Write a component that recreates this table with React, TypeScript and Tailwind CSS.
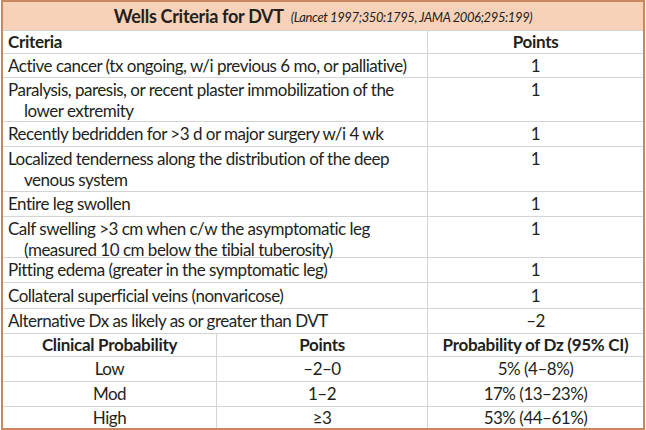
import React from "react";

const rows = [
  { text: ["Active cancer (tx ongoing, w/i previous 6 mo, or palliative)"], pts: "1", h: "h-[24px]" },
  { text: ["Paralysis, paresis, or recent plaster immobilization of the", "lower extremity"], pts: "1", h: "h-[44px]" },
  { text: ["Recently bedridden for >3 d or major surgery w/i 4 wk"], pts: "1", h: "h-[25px]" },
  { text: ["Localized tenderness along the distribution of the deep", "venous system"], pts: "1", h: "h-[45px]" },
  { text: ["Entire leg swollen"], pts: "1", h: "h-[25px]" },
  { text: ["Calf swelling >3 cm when c/w the asymptomatic leg", "(measured 10 cm below the tibial tuberosity)"], pts: "1", h: "h-[41px]" },
  { text: ["Pitting edema (greater in the symptomatic leg)"], pts: "1", h: "h-[25px]" },
  { text: ["Collateral superficial veins (nonvaricose)"], pts: "1", h: "h-[26px]" },
  { text: ["Alternative Dx as likely as or greater than DVT"], pts: "–2", h: "h-[25px]" },
];

const probs = [
  { level: "Low", pts: "–2–0", prob: "5% (4–8%)", h: "h-[25px]" },
  { level: "Mod", pts: "1–2", prob: "17% (13–23%)", h: "h-[25px]" },
  { level: "High", pts: "≥3", prob: "53% (44–61%)", h: "h-[22px]" },
];

export default function App() {
  return (
    <div className="w-[646px] h-[430px] bg-white pl-px">
      <div
        className="w-[644px] h-[430px] border-2 border-[#c98860] text-[#231f20] text-[17px] leading-[20px] tracking-[-0.5px]"
        style={{ fontFamily: "Lato, 'Open Sans', sans-serif" }}
      >
        {/* title bar */}
        <div className="h-[28px] bg-[#f8d2b8] flex items-center justify-center gap-[7px]">
          <span className="font-bold text-[18px] tracking-[-0.3px]">Wells Criteria for DVT</span>
          <span className="italic text-[13px] tracking-[-0.4px] pt-[2px]">
            (Lancet 1997;350:1795, JAMA 2006;295:199)
          </span>
        </div>

        {/* header */}
        <div className="flex h-[23px] border-t border-[#d4d4d4] font-bold tracking-[-0.3px]">
          <div className="w-[425px] border-r border-[#d4d4d4] pl-[5px] flex items-center">Criteria</div>
          <div className="flex-1 flex items-center justify-center">Points</div>
        </div>

        {rows.map((r) => (
          <div key={r.text[0]} className={`flex ${r.h} border-t border-[#d4d4d4]`}>
            <div
              className={`w-[425px] border-r border-[#d4d4d4] pl-[5px] flex flex-col ${
                r.text.length > 1 ? "justify-start pt-px leading-[21px]" : "justify-center"
              }`}
            >
              <span>{r.text[0]}</span>
              {r.text[1] && <span className="pl-[16px]">{r.text[1]}</span>}
            </div>
            <div
              className={`flex-1 flex justify-center ${
                r.text.length > 1 ? "items-start pt-px leading-[21px]" : "items-center"
              }`}
            >
              {r.pts}
            </div>
          </div>
        ))}

        {/* probability header */}
        <div className="flex h-[23px] border-t border-[#d4d4d4] font-bold tracking-[-0.3px]">
          <div className="w-[214px] border-r border-[#d4d4d4] flex items-center justify-center">
            Clinical Probability
          </div>
          <div className="w-[211px] border-r border-[#d4d4d4] flex items-center justify-center">Points</div>
          <div className="flex-1 flex items-center justify-center">Probability of Dz (95% CI)</div>
        </div>

        {probs.map((p) => (
          <div key={p.level} className={`flex ${p.h} border-t border-[#d4d4d4]`}>
            <div className="w-[214px] border-r border-[#d4d4d4] flex items-center justify-center">{p.level}</div>
            <div className="w-[211px] border-r border-[#d4d4d4] flex items-center justify-center">{p.pts}</div>
            <div className="flex-1 flex items-center justify-center">{p.prob}</div>
          </div>
        ))}
      </div>
    </div>
  );
}
